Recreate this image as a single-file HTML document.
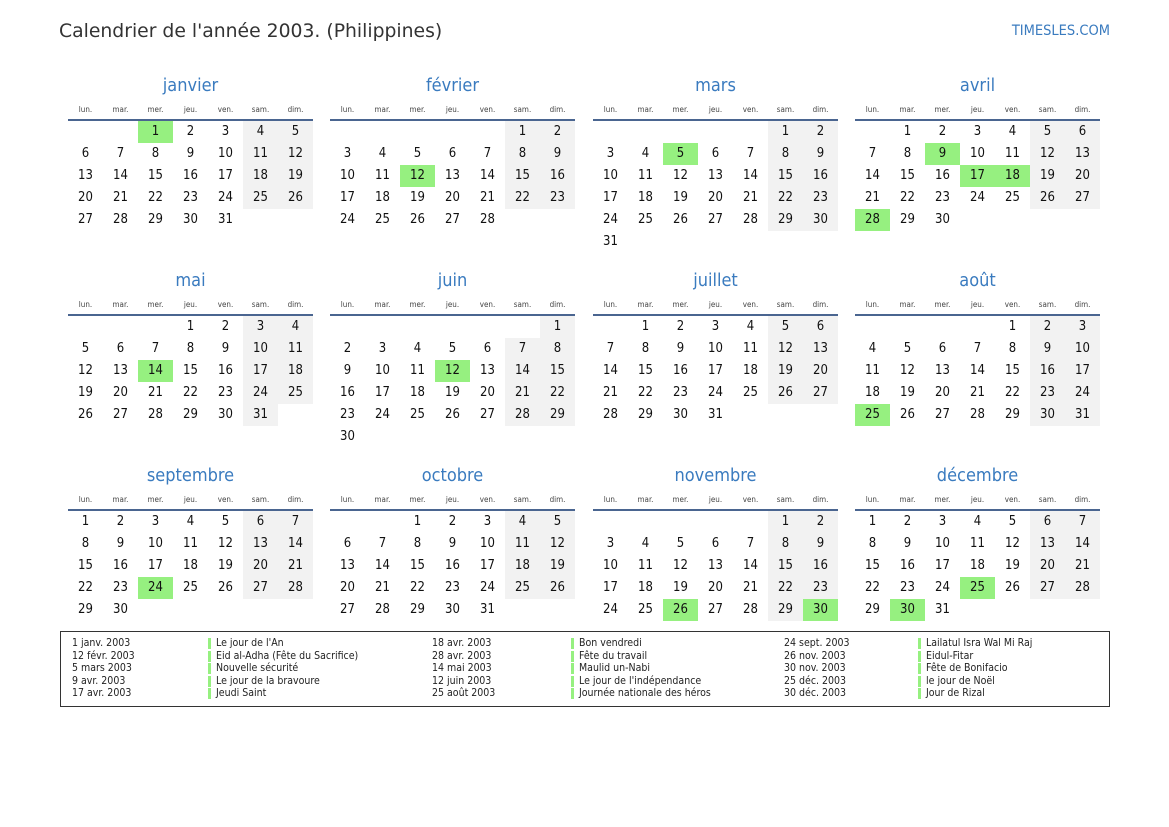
<!DOCTYPE html>
<html><head><meta charset="utf-8"><style>
*{margin:0;padding:0;box-sizing:border-box}
body{width:1169px;height:827px;background:#fff;font-family:"DejaVu Sans Condensed","DejaVu Sans","Liberation Sans",sans-serif;font-stretch:condensed;color:#111;position:relative;overflow:hidden}
h1{position:absolute;left:59px;top:21px;font-size:18.8px;font-weight:normal;color:#333;font-family:"DejaVu Sans",sans-serif;font-stretch:normal}
.site{position:absolute;right:59px;top:23px;font-size:14.5px;color:#3a7bbf}
.m{position:absolute;width:245px}
.t{height:24px;text-align:center;font-size:18px;color:#3a7bbf;line-height:24px}
.h{display:grid;grid-template-columns:repeat(7,35px);font-size:8px;color:#444;text-align:center;height:22px;line-height:22px;margin-top:1px;border-bottom:2px solid #4a6590}
.d{display:grid;grid-template-columns:repeat(7,35px);grid-auto-rows:22px;font-size:13px;text-align:center;line-height:22px}
.d b{font-weight:normal}
.d b:nth-child(7n+6),.d b:nth-child(7n){background:#f2f2f2}
.d b.g{background:#96f080}
.leg{position:absolute;left:60px;top:631px;width:1050px;height:76px;border:1.5px solid #333;font-size:10.5px;line-height:12.5px;color:#222}
.c{position:absolute;top:5px}
.n span{display:block;padding-left:8px;height:12.5px;line-height:12.5px;background:linear-gradient(#96f080,#96f080) no-repeat 0 1px/3px 11px}
</style></head><body>
<h1>Calendrier de l'année 2003. (Philippines)</h1>
<div class="site">TIMESLES.COM</div>

<div class="m" style="left:68px;top:74px"><div class="t">janvier</div><div class="h"><span>lun.</span><span>mar.</span><span>mer.</span><span>jeu.</span><span>ven.</span><span>sam.</span><span>dim.</span></div><div class="d"><i></i><i></i><b class="g">1</b><b>2</b><b>3</b><b>4</b><b>5</b><b>6</b><b>7</b><b>8</b><b>9</b><b>10</b><b>11</b><b>12</b><b>13</b><b>14</b><b>15</b><b>16</b><b>17</b><b>18</b><b>19</b><b>20</b><b>21</b><b>22</b><b>23</b><b>24</b><b>25</b><b>26</b><b>27</b><b>28</b><b>29</b><b>30</b><b>31</b></div></div>

<div class="m" style="left:330px;top:74px"><div class="t">février</div><div class="h"><span>lun.</span><span>mar.</span><span>mer.</span><span>jeu.</span><span>ven.</span><span>sam.</span><span>dim.</span></div><div class="d"><i></i><i></i><i></i><i></i><i></i><b>1</b><b>2</b><b>3</b><b>4</b><b>5</b><b>6</b><b>7</b><b>8</b><b>9</b><b>10</b><b>11</b><b class="g">12</b><b>13</b><b>14</b><b>15</b><b>16</b><b>17</b><b>18</b><b>19</b><b>20</b><b>21</b><b>22</b><b>23</b><b>24</b><b>25</b><b>26</b><b>27</b><b>28</b></div></div>

<div class="m" style="left:593px;top:74px"><div class="t">mars</div><div class="h"><span>lun.</span><span>mar.</span><span>mer.</span><span>jeu.</span><span>ven.</span><span>sam.</span><span>dim.</span></div><div class="d"><i></i><i></i><i></i><i></i><i></i><b>1</b><b>2</b><b>3</b><b>4</b><b class="g">5</b><b>6</b><b>7</b><b>8</b><b>9</b><b>10</b><b>11</b><b>12</b><b>13</b><b>14</b><b>15</b><b>16</b><b>17</b><b>18</b><b>19</b><b>20</b><b>21</b><b>22</b><b>23</b><b>24</b><b>25</b><b>26</b><b>27</b><b>28</b><b>29</b><b>30</b><b>31</b></div></div>

<div class="m" style="left:855px;top:74px"><div class="t">avril</div><div class="h"><span>lun.</span><span>mar.</span><span>mer.</span><span>jeu.</span><span>ven.</span><span>sam.</span><span>dim.</span></div><div class="d"><i></i><b>1</b><b>2</b><b>3</b><b>4</b><b>5</b><b>6</b><b>7</b><b>8</b><b class="g">9</b><b>10</b><b>11</b><b>12</b><b>13</b><b>14</b><b>15</b><b>16</b><b class="g">17</b><b class="g">18</b><b>19</b><b>20</b><b>21</b><b>22</b><b>23</b><b>24</b><b>25</b><b>26</b><b>27</b><b class="g">28</b><b>29</b><b>30</b></div></div>

<div class="m" style="left:68px;top:269px"><div class="t">mai</div><div class="h"><span>lun.</span><span>mar.</span><span>mer.</span><span>jeu.</span><span>ven.</span><span>sam.</span><span>dim.</span></div><div class="d"><i></i><i></i><i></i><b>1</b><b>2</b><b>3</b><b>4</b><b>5</b><b>6</b><b>7</b><b>8</b><b>9</b><b>10</b><b>11</b><b>12</b><b>13</b><b class="g">14</b><b>15</b><b>16</b><b>17</b><b>18</b><b>19</b><b>20</b><b>21</b><b>22</b><b>23</b><b>24</b><b>25</b><b>26</b><b>27</b><b>28</b><b>29</b><b>30</b><b>31</b></div></div>

<div class="m" style="left:330px;top:269px"><div class="t">juin</div><div class="h"><span>lun.</span><span>mar.</span><span>mer.</span><span>jeu.</span><span>ven.</span><span>sam.</span><span>dim.</span></div><div class="d"><i></i><i></i><i></i><i></i><i></i><i></i><b>1</b><b>2</b><b>3</b><b>4</b><b>5</b><b>6</b><b>7</b><b>8</b><b>9</b><b>10</b><b>11</b><b class="g">12</b><b>13</b><b>14</b><b>15</b><b>16</b><b>17</b><b>18</b><b>19</b><b>20</b><b>21</b><b>22</b><b>23</b><b>24</b><b>25</b><b>26</b><b>27</b><b>28</b><b>29</b><b>30</b></div></div>

<div class="m" style="left:593px;top:269px"><div class="t">juillet</div><div class="h"><span>lun.</span><span>mar.</span><span>mer.</span><span>jeu.</span><span>ven.</span><span>sam.</span><span>dim.</span></div><div class="d"><i></i><b>1</b><b>2</b><b>3</b><b>4</b><b>5</b><b>6</b><b>7</b><b>8</b><b>9</b><b>10</b><b>11</b><b>12</b><b>13</b><b>14</b><b>15</b><b>16</b><b>17</b><b>18</b><b>19</b><b>20</b><b>21</b><b>22</b><b>23</b><b>24</b><b>25</b><b>26</b><b>27</b><b>28</b><b>29</b><b>30</b><b>31</b></div></div>

<div class="m" style="left:855px;top:269px"><div class="t">août</div><div class="h"><span>lun.</span><span>mar.</span><span>mer.</span><span>jeu.</span><span>ven.</span><span>sam.</span><span>dim.</span></div><div class="d"><i></i><i></i><i></i><i></i><b>1</b><b>2</b><b>3</b><b>4</b><b>5</b><b>6</b><b>7</b><b>8</b><b>9</b><b>10</b><b>11</b><b>12</b><b>13</b><b>14</b><b>15</b><b>16</b><b>17</b><b>18</b><b>19</b><b>20</b><b>21</b><b>22</b><b>23</b><b>24</b><b class="g">25</b><b>26</b><b>27</b><b>28</b><b>29</b><b>30</b><b>31</b></div></div>

<div class="m" style="left:68px;top:464px"><div class="t">septembre</div><div class="h"><span>lun.</span><span>mar.</span><span>mer.</span><span>jeu.</span><span>ven.</span><span>sam.</span><span>dim.</span></div><div class="d"><b>1</b><b>2</b><b>3</b><b>4</b><b>5</b><b>6</b><b>7</b><b>8</b><b>9</b><b>10</b><b>11</b><b>12</b><b>13</b><b>14</b><b>15</b><b>16</b><b>17</b><b>18</b><b>19</b><b>20</b><b>21</b><b>22</b><b>23</b><b class="g">24</b><b>25</b><b>26</b><b>27</b><b>28</b><b>29</b><b>30</b></div></div>

<div class="m" style="left:330px;top:464px"><div class="t">octobre</div><div class="h"><span>lun.</span><span>mar.</span><span>mer.</span><span>jeu.</span><span>ven.</span><span>sam.</span><span>dim.</span></div><div class="d"><i></i><i></i><b>1</b><b>2</b><b>3</b><b>4</b><b>5</b><b>6</b><b>7</b><b>8</b><b>9</b><b>10</b><b>11</b><b>12</b><b>13</b><b>14</b><b>15</b><b>16</b><b>17</b><b>18</b><b>19</b><b>20</b><b>21</b><b>22</b><b>23</b><b>24</b><b>25</b><b>26</b><b>27</b><b>28</b><b>29</b><b>30</b><b>31</b></div></div>

<div class="m" style="left:593px;top:464px"><div class="t">novembre</div><div class="h"><span>lun.</span><span>mar.</span><span>mer.</span><span>jeu.</span><span>ven.</span><span>sam.</span><span>dim.</span></div><div class="d"><i></i><i></i><i></i><i></i><i></i><b>1</b><b>2</b><b>3</b><b>4</b><b>5</b><b>6</b><b>7</b><b>8</b><b>9</b><b>10</b><b>11</b><b>12</b><b>13</b><b>14</b><b>15</b><b>16</b><b>17</b><b>18</b><b>19</b><b>20</b><b>21</b><b>22</b><b>23</b><b>24</b><b>25</b><b class="g">26</b><b>27</b><b>28</b><b>29</b><b class="g">30</b></div></div>

<div class="m" style="left:855px;top:464px"><div class="t">décembre</div><div class="h"><span>lun.</span><span>mar.</span><span>mer.</span><span>jeu.</span><span>ven.</span><span>sam.</span><span>dim.</span></div><div class="d"><b>1</b><b>2</b><b>3</b><b>4</b><b>5</b><b>6</b><b>7</b><b>8</b><b>9</b><b>10</b><b>11</b><b>12</b><b>13</b><b>14</b><b>15</b><b>16</b><b>17</b><b>18</b><b>19</b><b>20</b><b>21</b><b>22</b><b>23</b><b>24</b><b class="g">25</b><b>26</b><b>27</b><b>28</b><b>29</b><b class="g">30</b><b>31</b></div></div>

<div class="leg">
<div class="c" style="left:11px">1 janv. 2003<br>12 févr. 2003<br>5 mars 2003<br>9 avr. 2003<br>17 avr. 2003</div>
<div class="c n" style="left:147px"><span>Le jour de l'An</span><span>Eid al-Adha (Fête du Sacrifice)</span><span>Nouvelle sécurité</span><span>Le jour de la bravoure</span><span>Jeudi Saint</span></div>
<div class="c" style="left:371px">18 avr. 2003<br>28 avr. 2003<br>14 mai 2003<br>12 juin 2003<br>25 août 2003</div>
<div class="c n" style="left:510px"><span>Bon vendredi</span><span>Fête du travail</span><span>Maulid un-Nabi</span><span>Le jour de l'indépendance</span><span>Journée nationale des héros</span></div>
<div class="c" style="left:723px">24 sept. 2003<br>26 nov. 2003<br>30 nov. 2003<br>25 déc. 2003<br>30 déc. 2003</div>
<div class="c n" style="left:857px"><span>Lailatul Isra Wal Mi Raj</span><span>Eidul-Fitar</span><span>Fête de Bonifacio</span><span>le jour de Noël</span><span>Jour de Rizal</span></div>
</div>
</body></html>
